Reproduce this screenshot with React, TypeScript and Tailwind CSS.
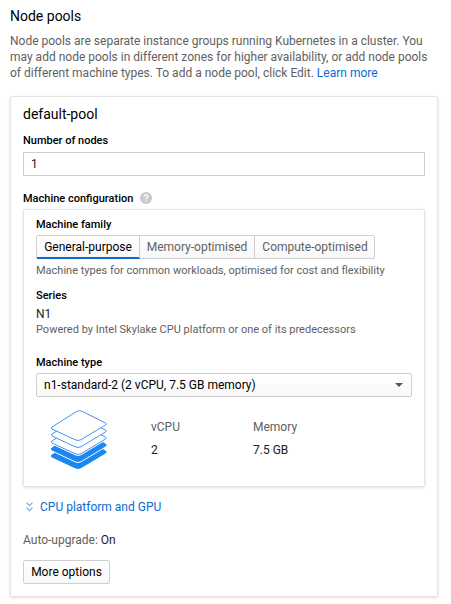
import React from "react";

function Label({ children }: { children: React.ReactNode }) {
  return <div className="pt-px text-[11px] leading-[15px] font-medium text-black">{children}</div>;
}

function LayersIcon() {
  const top =
    "M31.5 6.5 Q34.5 4.8 37.5 6.5 L60.5 18 Q62 19 60.5 20 L36 34.7 Q33 36.3 30 34.7 L7 24 Q5.5 23 7 22 Z";
  return (
    <svg width="70" height="70" viewBox="0 0 70 70" fill="none" className="block">
      <g stroke="#4694ee" strokeWidth="1" fill="#fff">
        <path d={top} transform="translate(0 28)" fill="#1a88f0" stroke="#1a88f0" />
        <path d={top} transform="translate(0 22)" stroke="#fff" />
        <path d={top} transform="translate(0 21)" fill="#1a88f0" stroke="#1a88f0" />
        <path d={top} transform="translate(0 15)" stroke="#fff" />
        <path d={top} transform="translate(0 14)" />
        <path d={top} transform="translate(0 7)" />
        <path d={top} />
      </g>
    </svg>
  );
}

export default function App() {
  return (
    <main className="h-[604px] w-[451px] overflow-hidden bg-white pt-2 pl-[10px] font-['Roboto',sans-serif] text-xs leading-4 text-[#212121]">
      <h1 className="text-sm leading-4 text-black">Node pools</h1>
      <p className="mt-[9px] whitespace-nowrap text-[#616161]">
        Node pools are separate instance groups running Kubernetes in a cluster. You
        <br />
        may add node pools in different zones for higher availability, or add node pools
        <br />
        of different machine types. To add a node pool, click Edit.{" "}
        <a className="text-[#0b6bd3]">Learn more</a>
      </p>

      <section className="mt-[15px] h-[501px] w-[428px] rounded-[2px] border border-[#e3e3e3] px-3 pt-[9px] shadow-[0_1px_3px_rgba(0,0,0,0.12)]">
        <h2 className="text-sm leading-4 text-black">default-pool</h2>
        <div className="mt-[10px]">
          <Label>Number of nodes</Label>
        </div>
        <div className="mt-1 flex h-6 items-center border border-[#cfcfcf] px-[7px]">1</div>
        <div className="mt-[14px] flex items-center gap-[7px]">
          <Label>Machine configuration</Label>
          <svg width="12" height="12" viewBox="0 0 12 12">
            <circle cx="6" cy="6" r="6" fill="#c8c8c8" />
            <path d="M4.1 4.8C4.1 2.2 7.9 2.2 7.9 4.6C7.9 5.8 6 6 6 7.4" fill="none" stroke="#fff" strokeWidth="1.3" />
            <path d="M5.3 8.4h1.4v1.4H5.3z" fill="#fff" />
          </svg>
        </div>

        <div className="mt-[3px] h-[278px] rounded-[2px] border border-[#e3e3e3] px-3 pt-[6px] shadow-[0_1px_3px_rgba(0,0,0,0.12)]">
          <Label>Machine family</Label>
          <div className="mt-[3px] flex h-6 w-[339px] rounded-[2px] border border-[#cfcfcf] bg-linear-to-b from-white to-[#f8f8f8] text-[#616161]">
            <div className="flex w-[103px] items-center justify-center border-r border-[#cfcfcf] text-black shadow-[inset_0_-1px_0_#0b6bd3,0_1px_0_#0b6bd3]">
              General-purpose
            </div>
            <div className="flex w-[115px] items-center justify-center border-r border-[#cfcfcf]">Memory-optimised</div>
            <div className="flex flex-1 items-center justify-center pl-px">Compute-optimised</div>
          </div>
          <div className="mt-1 text-[11px] leading-[15px] text-[#616161]">
            Machine types for common workloads, optimised for cost and flexibility
          </div>
          <div className="mt-[9px]">
            <Label>Series</Label>
          </div>
          <div className="mt-[3px] h-4">N1</div>
          <div className="text-[11px] leading-[15px] text-[#616161]">
            Powered by Intel Skylake CPU platform or one of its predecessors
          </div>
          <div className="mt-[17px]">
            <Label>Machine type</Label>
          </div>
          <div className="mt-[3px] flex h-6 items-center justify-between rounded-[2px] border border-[#cfcfcf] bg-linear-to-b from-white to-[#f8f8f8] px-[7px] text-black">
            n1-standard-2 (2 vCPU, 7.5 GB memory)
            <svg width="8" height="4" viewBox="0 0 8 4" className="mr-px">
              <path d="M0 0h8L4 4z" fill="#555" />
            </svg>
          </div>
          <div className="mt-2 flex">
            <div className="ml-[9px] w-[106px]">
              <LayersIcon />
            </div>
            <div className="w-[102px] pt-[14px]">
              <div className="text-[#616161]">vCPU</div>
              <div className="mt-[7px]">2</div>
            </div>
            <div className="pt-[14px]">
              <div className="text-[#616161]">Memory</div>
              <div className="mt-[7px]">7.5 GB</div>
            </div>
          </div>
        </div>

        <a className="mt-3 flex items-center gap-[7px] pl-[3px] text-[#0b6bd3]">
          <svg width="7" height="10" viewBox="0 0 7 10" fill="none" stroke="#72a9e6" strokeWidth="1.2" className="-mt-px">
            <path d="M.5 .7l3 3 3-3M.5 5.7l3 3 3-3" />
          </svg>
          CPU platform and GPU
        </a>
        <div className="mt-[17px]">
          <span className="text-[#616161]">Auto-upgrade: </span>On
        </div>
        <button className="mt-3 flex h-6 w-[87px] items-center justify-center rounded-[2px] border border-[#cfcfcf] bg-linear-to-b from-white to-[#f8f8f8] text-black">
          More options
        </button>
      </section>
    </main>
  );
}
